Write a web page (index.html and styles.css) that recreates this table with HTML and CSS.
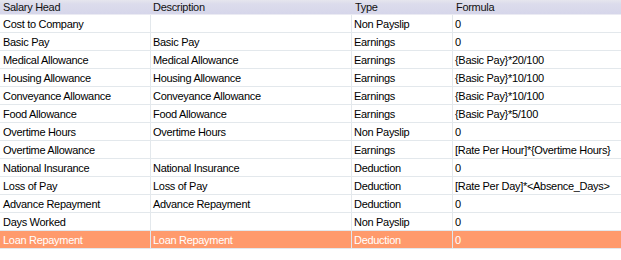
FILE: index.html
```html
<!DOCTYPE html>
<html>
<head>
<meta charset="utf-8">
<link rel="stylesheet" href="styles.css">
</head>
<body>
<div class="grid">
  <div class="row head">
    <div class="cell">Salary Head</div><div class="cell">Description</div><div class="cell">Type</div><div class="cell">Formula</div>
  </div>
  <div class="row"><div class="cell">Cost to Company</div><div class="cell"></div><div class="cell">Non Payslip</div><div class="cell">0</div></div>
  <div class="row"><div class="cell">Basic Pay</div><div class="cell">Basic Pay</div><div class="cell">Earnings</div><div class="cell">0</div></div>
  <div class="row"><div class="cell">Medical Allowance</div><div class="cell">Medical Allowance</div><div class="cell">Earnings</div><div class="cell">{Basic Pay}*20/100</div></div>
  <div class="row"><div class="cell">Housing Allowance</div><div class="cell">Housing Allowance</div><div class="cell">Earnings</div><div class="cell">{Basic Pay}*10/100</div></div>
  <div class="row"><div class="cell">Conveyance Allowance</div><div class="cell">Conveyance Allowance</div><div class="cell">Earnings</div><div class="cell">{Basic Pay}*10/100</div></div>
  <div class="row"><div class="cell">Food Allowance</div><div class="cell">Food Allowance</div><div class="cell">Earnings</div><div class="cell">{Basic Pay}*5/100</div></div>
  <div class="row"><div class="cell">Overtime Hours</div><div class="cell">Overtime Hours</div><div class="cell">Non Payslip</div><div class="cell">0</div></div>
  <div class="row"><div class="cell">Overtime Allowance</div><div class="cell"></div><div class="cell">Earnings</div><div class="cell">[Rate Per Hour]*{Overtime Hours}</div></div>
  <div class="row"><div class="cell">National Insurance</div><div class="cell">National Insurance</div><div class="cell">Deduction</div><div class="cell">0</div></div>
  <div class="row"><div class="cell">Loss of Pay</div><div class="cell">Loss of Pay</div><div class="cell">Deduction</div><div class="cell">[Rate Per Day]*&lt;Absence_Days&gt;</div></div>
  <div class="row"><div class="cell">Advance Repayment</div><div class="cell">Advance Repayment</div><div class="cell">Deduction</div><div class="cell">0</div></div>
  <div class="row"><div class="cell">Days Worked</div><div class="cell"></div><div class="cell">Non Payslip</div><div class="cell">0</div></div>
  <div class="row sel"><div class="cell">Loan Repayment</div><div class="cell">Loan Repayment</div><div class="cell">Deduction</div><div class="cell">0</div></div>
</div>
</body>
</html>
```
FILE: styles.css
```css
html, body {
  margin: 0;
  padding: 0;
  background: #ffffff;
}
body {
  font-family: "Liberation Sans", Arial, sans-serif;
  font-size: 11px;
  letter-spacing: -0.3px;
  color: #000000;
}
.grid {
  display: flex;
  flex-direction: column;
  width: 621px;
}
.row {
  display: grid;
  grid-template-columns: 151px 201px 101px 1fr;
  height: 18px;
  box-sizing: border-box;
  border-bottom: 1px solid #e3e8ec;
}
.cell {
  box-sizing: border-box;
  border-right: 1px solid #e3e8ec;
  padding-left: 2px;
  padding-top: 1px;
  line-height: 17px;
  white-space: nowrap;
  overflow: hidden;
}
.cell:first-child {
  padding-left: 3px;
}
.cell:last-child {
  border-right: none;
}
.head {
  height: 15px;
  border-bottom: 1px solid #ebebf3;
  background: linear-gradient(#e6e6ee 0px, #dcdcec 4px, #d6d6ea 100%);
}
.head .cell {
  border-right: none;
  padding-top: 0;
  line-height: 14px;
  color: #111111;
}
.head .cell:nth-child(3),
.head .cell:nth-child(4) {
  padding-left: 3px;
}
.sel {
  background: #ff9a6c;
  color: #ffffff;
}
.sel .cell {
  border-right-color: #dde6ee;
}
```
